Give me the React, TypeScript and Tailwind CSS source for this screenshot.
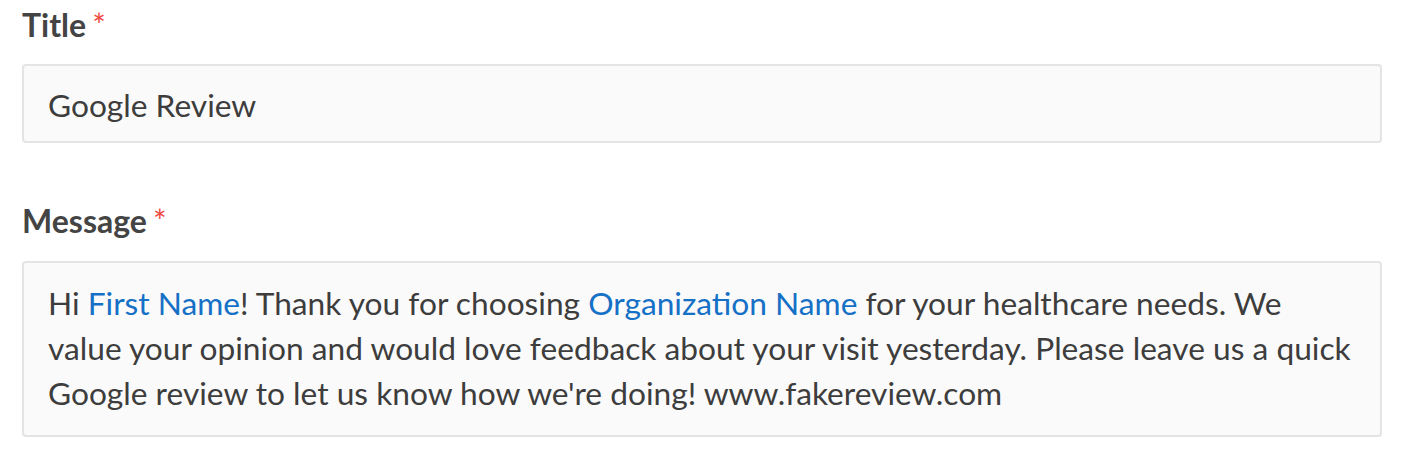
const Required = () => (
  <span className="ml-[6px] font-normal text-[#ef4b43]">*</span>
);

const Link = ({ children }: { children: React.ReactNode }) => (
  <span className="text-[#1570c6]">{children}</span>
);

export default function App() {
  return (
    <div className="min-h-screen bg-white pl-[22px] pr-[20px] pt-[5px] font-['Lato','Liberation_Sans',sans-serif] text-[#3d3d3d]">
      {/* Title */}
      <label className="block text-[32px] font-bold leading-[40px] text-[#444]">
        Title
        <Required />
      </label>
      <div className="mt-[19px] h-[79px] rounded-[4px] border-2 border-[#e4e4e4] bg-[#fafafa] pl-[24px] pr-[18px] pt-[17px] text-[31.7px] leading-[45px]">
        Google Review
      </div>

      {/* Message */}
      <label className="mt-[58px] block text-[32px] font-bold leading-[40px] text-[#444]">
        Message
        <Required />
      </label>
      <div className="mt-[20px] rounded-[4px] border-2 border-[#e4e4e4] bg-[#fafafa] pl-[24px] pr-[18px] pt-[18px] pb-[19px] text-[31.7px] leading-[45px]">
        Hi <Link>First Name</Link>! Thank you for choosing{" "}
        <Link>Organization Name</Link> for your healthcare needs. We value
        your opinion and would love feedback about your visit yesterday.
        Please leave us a quick Google review to let us know how we're doing!
        www.fakereview.com
      </div>
    </div>
  );
}
